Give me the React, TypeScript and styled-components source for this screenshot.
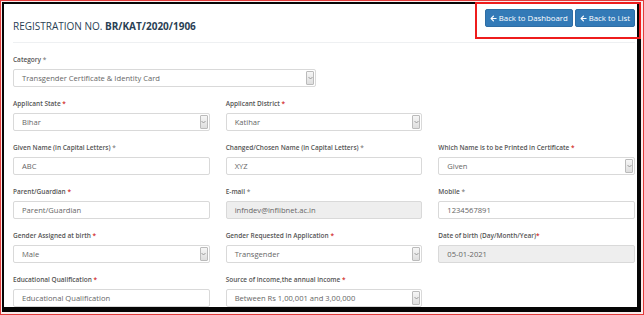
import React from 'react';
import styled, { createGlobalStyle } from 'styled-components';

const GlobalStyle = createGlobalStyle`
    html, body {
        margin: 0;
        padding: 0;
        background: #fbeaea;
    }
    * {
        box-sizing: border-box;
    }
`;

interface IField {
    label: string;
    value: string;
    kind: 'select' | 'input' | 'readonly';
    redStar?: boolean;
    starGap?: boolean;
}

const rows: IField[][] = [
    [
        { label: 'Applicant State', value: 'Bihar', kind: 'select', redStar: true },
        { label: 'Applicant District', value: 'Katihar', kind: 'select', redStar: true },
    ],
    [
        { label: 'Given Name (in Capital Letters)', value: 'ABC', kind: 'input' },
        { label: 'Changed/Chosen Name (in Capital Letters)', value: 'XYZ', kind: 'input' },
        { label: 'Which Name is to be Printed in Certificate', value: 'Given', kind: 'select', redStar: true },
    ],
    [
        { label: 'Parent/Guardian', value: 'Parent/Guardian', kind: 'input', redStar: true },
        { label: 'E-mail', value: 'infndev@inflibnet.ac.in', kind: 'readonly' },
        { label: 'Mobile', value: '1234567891', kind: 'input' },
    ],
    [
        { label: 'Gender Assigned at birth', value: 'Male', kind: 'select', redStar: true },
        { label: 'Gender Requested in Application', value: 'Transgender', kind: 'select', redStar: true },
        { label: 'Date of birth (Day/Month/Year)', value: '05-01-2021', kind: 'readonly', redStar: true, starGap: false },
    ],
    [
        { label: 'Educational Qualification', value: 'Educational Qualification', kind: 'input', redStar: true },
        { label: 'Source of income,the annual income', value: 'Between Rs 1,00,001 and 3,00,000', kind: 'select', redStar: true },
    ],
];

const ArrowLeft = () => (
    <svg width="7" height="7" viewBox="0 0 448 512" fill="currentColor">
        <path d="M257.5 445.1l-22.2 22.2c-9.4 9.4-24.6 9.4-33.9 0L7 273c-9.4-9.4-9.4-24.6 0-33.9L201.4 44.7c9.4-9.4 24.6-9.4 33.9 0l22.2 22.2c9.5 9.5 9.3 25-.4 34.3L136.6 216H424c13.3 0 24 10.7 24 24v32c0 13.3-10.7 24-24 24H136.6l120.5 114.8c9.8 9.3 10 24.8.4 34.3z" />
    </svg>
);

const Field = ({ label, value, kind, redStar, starGap = true }: IField) => (
    <FieldBox>
        <Label>
            {label}
            <Star $red={!!redStar}>{starGap ? ' *' : '*'}</Star>
        </Label>
        <Control $readonly={kind === 'readonly'}>
            {value}
            {kind === 'select' && (
                <SelectArrow>
                    <svg width="5" height="4" viewBox="0 0 10 6">
                        <path d="M1 1l4 4 4-4" stroke="#888" strokeWidth="1.6" fill="none" />
                    </svg>
                </SelectArrow>
            )}
        </Control>
    </FieldBox>
);

const App = () => {
    return (
        <>
            <GlobalStyle />
            <Screen>
                <Frame>
                    <Panel>
                        <Header>
                            <Title>
                                REGISTRATION NO. <b>BR/KAT/2020/1906</b>
                            </Title>
                            <Actions>
                                <BlueButton>
                                    <ArrowLeft />
                                    Back to Dashboard
                                </BlueButton>
                                <BlueButton>
                                    <ArrowLeft />
                                    Back to List
                                </BlueButton>
                            </Actions>
                        </Header>
                        <Body>
                            <HalfRow>
                                <Field
                                    label="Category"
                                    value="Transgender Certificate & Identity Card"
                                    kind="select"
                                />
                            </HalfRow>
                            {rows.map((row, i) => (
                                <Row key={i}>
                                    {row.map(f => (
                                        <Field key={f.label} {...f} />
                                    ))}
                                </Row>
                            ))}
                        </Body>
                    </Panel>
                </Frame>
                <Highlight />
            </Screen>
        </>
    );
};

const Screen = styled.div`
    position: relative;
    width: 644px;
    height: 315px;
    padding: 1px 2px 2px 1px;
    border: 1px solid #e23a3a;
    background: #fbeaea;
`;

const Frame = styled.div`
    height: 310px;
    border-style: solid;
    border-color: #050505;
    border-width: 2px 4px 5px 2px;
`;

const Panel = styled.div`
    height: 100%;
    background: #fff;
    overflow: hidden;
    padding: 0 2px 0 9px;
    font-family: 'Open Sans', 'Noto Sans', sans-serif;
`;

const Header = styled.header`
    display: flex;
    justify-content: space-between;
    align-items: flex-start;
    height: 39px;
    border-bottom: 1px solid #eef0f2;
    padding-top: 5px;
`;

const Title = styled.h2`
    margin: 10px 0 0;
    font-size: 10px;
    font-weight: 400;
    color: #2a3f54;

    b {
        font-weight: 700;
    }
`;

const Actions = styled.div`
    display: flex;
    gap: 2px;
`;

const BlueButton = styled.button`
    display: flex;
    align-items: center;
    gap: 2px;
    height: 18px;
    padding: 0 4px;
    border: 1px solid #2e6da4;
    border-radius: 2px;
    background: #337ab7;
    color: #fff;
    font-family: 'Open Sans', 'Noto Sans', sans-serif;
    font-size: 7.8px;
    white-space: nowrap;
`;

const Body = styled.div`
    padding-top: 12px;
    width: 622px;
`;

const HalfRow = styled.div`
    width: 303px;
    margin-bottom: 12px;
`;

const Row = styled.div`
    display: grid;
    grid-template-columns: repeat(3, 1fr);
    column-gap: 16px;
    margin-bottom: 12px;
`;

const FieldBox = styled.div`
    display: flex;
    flex-direction: column;
`;

const Label = styled.label`
    height: 10px;
    margin-bottom: 4px;
    font-size: 6.5px;
    line-height: 10px;
    font-weight: 600;
    color: #555;
    white-space: nowrap;
`;

const Star = styled.span<{ $red: boolean }>`
    color: ${props => (props.$red ? '#d32f2f' : '#888')};
`;

const Control = styled.div<{ $readonly: boolean }>`
    position: relative;
    height: 18px;
    padding-left: 8px;
    border: 1px solid #d9d9d9;
    border-radius: 2px;
    background: ${props => (props.$readonly ? '#eeeeee' : '#fff')};
    color: #666;
    font-size: 7.6px;
    line-height: 16px;
    white-space: nowrap;
`;

const SelectArrow = styled.span`
    position: absolute;
    top: 1px;
    right: 1px;
    width: 8px;
    height: 14px;
    display: flex;
    align-items: center;
    justify-content: center;
    border: 1px solid #bbb;
    border-radius: 1px;
    background: linear-gradient(#f6f6f6, #dedede);
`;

const Highlight = styled.div`
    position: absolute;
    top: 1px;
    left: 474px;
    width: 166px;
    height: 37px;
    border: 2px solid #ee1c1c;
    pointer-events: none;
`;

export default App;
